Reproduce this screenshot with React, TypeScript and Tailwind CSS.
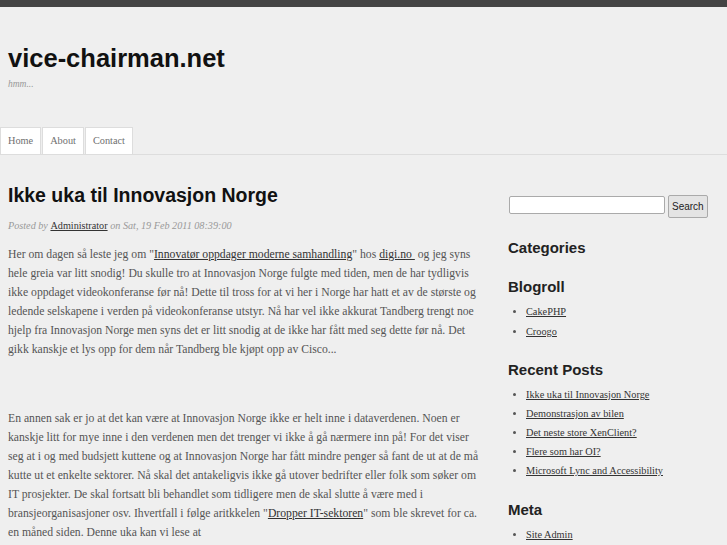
import React from "react";

const serif = { fontFamily: '"Liberation Serif", "Times New Roman", serif' };
const sans = { fontFamily: '"Liberation Sans", Arial, sans-serif' };

function A({ children }: { children: React.ReactNode }) {
  return <a href="#" className="text-[#333] underline">{children}</a>;
}

export default function App() {
  const recent = [
    "Ikke uka til Innovasjon Norge",
    "Demonstrasjon av bilen",
    "Det neste store XenClient?",
    "Flere som har OI?",
    "Microsoft Lync and Accessibility",
  ];
  return (
    <div className="min-h-[545px] w-[727px] overflow-hidden bg-[#efefef]" style={serif}>
      <div className="h-[7px] bg-[#444]" />
      <header className="px-[8px] pt-[36px]">
        <h1 className="text-[25.5px] leading-[30px] font-bold text-[#111]" style={sans}>
          vice-chairman.net
        </h1>
        <p className="mt-[5px] text-[9.5px] leading-[12px] italic text-[#999]">hmm...</p>
      </header>
      <nav className="mt-[37px] flex border-b border-[#ddd]">
        {["Home", "About", "Contact"].map((t) => (
          <a
            key={t}
            href="#"
            className="mr-[1px] flex h-[27px] items-center border border-b-0 border-[#ddd] bg-white px-[7px] text-[10.3px] text-[#707070]"
          >
            {t}
          </a>
        ))}
      </nav>
      <div className="flex">
        <main className="ml-[8px] w-[478px]">
          <h2 className="mt-[28px] text-[19.5px] leading-[24px] font-bold text-[#111]" style={sans}>
            Ikke uka til Innovasjon Norge
          </h2>
          <p className="mt-[12px] text-[10.2px] leading-[14px] text-[#999]">
            <i>Posted by </i>
            <A>Administrator</A>
            <i> on Sat, 19 Feb 2011 08:39:00</i>
          </p>
          <div className="mt-[12px] text-[11.7px] leading-[19px] text-[#555]">
            <p>
              Her om dagen så leste jeg om "<A>Innovatør oppdager moderne samhandling</A>" hos <A>digi.no&nbsp;</A> og jeg syns hele greia var litt snodig! Du skulle tro at Innovasjon Norge fulgte med tiden, men de har tydligvis ikke oppdaget videokonferanse før nå! Dette til tross for at vi her i Norge har hatt et av de største og ledende selskapene i verden på videokonferanse utstyr. Nå har vel ikke akkurat Tandberg trengt noe hjelp fra Innovasjon Norge men syns det er litt snodig at de ikke har fått med seg dette før nå. Det gikk kanskje et lys opp for dem når Tandberg ble kjøpt opp av Cisco...
            </p>
            <p className="mt-[50px]">
              En annen sak er jo at det kan være at Innovasjon Norge ikke er helt inne i dataverdenen. Noen er kanskje litt for mye inne i den verdenen men det trenger vi ikke å gå nærmere inn på! For det viser seg at i og med budsjett kuttene og at Innovasjon Norge har fått mindre penger så fant de ut at de må kutte ut et enkelte sektorer. Nå skal det antakeligvis ikke gå utover bedrifter eller folk som søker om IT prosjekter. De skal fortsatt bli behandlet som tidligere men de skal slutte å være med i bransjeorganisasjoner osv. Ihvertfall i følge aritkkelen "<A>Dropper IT-sektoren</A>" som ble skrevet for ca. en måned siden. Denne uka kan vi lese at
            </p>
            <p>
              "<A><b>Mer fokus på samspill mellom Innovasjon Norge og næringslivet</b></A>". Vi får håpe at det ikke tar så lang tid før de ser lyset.
            </p>
          </div>
        </main>
        <aside className="ml-[22px] w-[200px]">
          <div className="mt-[40px] flex items-start">
            <input
              type="text"
              className="mt-[1px] ml-[1px] h-[18px] w-[156px] rounded-[2px] border border-[#aaa] bg-white"
            />
            <button
              className="ml-[3px] h-[23px] rounded-[2px] border border-[#aaa] bg-[#e4e4e4] px-[3px] text-[10px] text-[#222]"
              style={sans}
            >
              Search
            </button>
          </div>
          <h3 className="mt-[21px] text-[15px] leading-[18px] font-bold text-[#222]" style={sans}>
            Categories
          </h3>
          <h3 className="mt-[21px] text-[15px] leading-[18px] font-bold text-[#222]" style={sans}>
            Blogroll
          </h3>
          <ul className="mt-[6px] list-disc pl-[18px] text-[10.3px] leading-[20px] text-[#555]">
            <li><A>CakePHP</A></li>
            <li><A>Croogo</A></li>
          </ul>
          <h3 className="mt-[19px] text-[15px] leading-[18px] font-bold text-[#222]" style={sans}>
            Recent Posts
          </h3>
          <ul className="mt-[6px] list-disc pl-[18px] text-[10.3px] leading-[19px] text-[#555]">
            {recent.map((r) => (
              <li key={r}><A>{r}</A></li>
            ))}
          </ul>
          <h3 className="mt-[21px] text-[15px] leading-[18px] font-bold text-[#222]" style={sans}>
            Meta
          </h3>
          <ul className="mt-[6px] list-disc pl-[18px] text-[10.3px] leading-[19px] text-[#555]">
            <li><A>Site Admin</A></li>
            <li><A>Log in</A></li>
          </ul>
        </aside>
      </div>
    </div>
  );
}
